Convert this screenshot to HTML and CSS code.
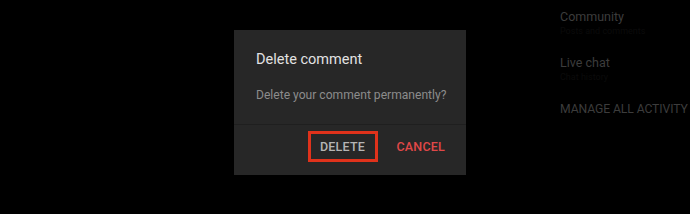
FILE: index.html
```html
<!DOCTYPE html>
<html lang="en">

<head>
    <meta charset="UTF-8">
    <meta name="viewport" content="width=device-width, initial-scale=1.0">
    <title>Delete comment</title>
    <link rel="stylesheet" href="styles.css">
</head>

<body>
    <div class="screen">
        <!-- 댓글 삭제 대화상자 -->
        <div class="dialog-area">
            <div class="dialog">
                <div class="dialog-body">
                    <div class="dialog-title">Delete comment</div>
                    <div class="dialog-text">Delete your comment permanently?</div>
                </div>
                <div class="dialog-actions">
                    <button class="action delete">DELETE</button>
                    <button class="action cancel">CANCEL</button>
                </div>
            </div>
        </div>

        <!-- 우측 메뉴 (배경) -->
        <div class="side-menu">
            <div class="side-item">
                <div class="side-label">Community</div>
                <div class="side-sub">Posts and comments</div>
            </div>
            <div class="side-item">
                <div class="side-label">Live chat</div>
                <div class="side-sub">Chat history</div>
            </div>
            <div class="side-item">
                <div class="side-label caps">MANAGE ALL ACTIVITY</div>
            </div>
        </div>
    </div>
</body>

</html>
```

FILE: styles.css
```css
body {
    margin: 0;
    background-color: #000;
    font-family: Roboto, "Liberation Sans", sans-serif;
    overflow: hidden;
}

.screen {
    display: flex;
    width: 690px;
    height: 214px;
}

.dialog-area {
    padding: 30px 0 0 234px;
}

/* 대화상자 */
.dialog {
    width: 232px;
    height: 145px;
    background-color: #272727;
    display: flex;
    flex-direction: column;
}

.dialog-body {
    padding: 21px 10px 0 22px;
    height: 73px;
    border-bottom: 1px solid #1f1f1f;
}

.dialog-title {
    color: #e2e2e2;
    font-size: 14.5px;
    line-height: 17px;
}

.dialog-text {
    margin-top: 20px;
    color: #8c8c8c;
    font-size: 12.1px;
    line-height: 15px;
    white-space: nowrap;
}

.dialog-actions {
    display: flex;
    justify-content: flex-end;
    align-items: center;
    gap: 19px;
    padding: 6px 21px 0 0;
}

.action {
    background: none;
    border: none;
    font-family: Roboto, "Liberation Sans", sans-serif;
    font-size: 12.5px;
    font-weight: 500;
    letter-spacing: 0.2px;
    padding: 0;
    cursor: pointer;
}

.delete {
    color: #b5b5b5;
    width: 70px;
    height: 31px;
    border: 3px solid #e0321b;
    box-sizing: border-box;
}

.cancel {
    color: #e04848;
}

/* 우측 메뉴 */
.side-menu {
    padding: 9px 0 0 326px;
    margin-left: -232px;
    white-space: nowrap;
}

.side-item {
    height: 46px;
}

.side-label {
    color: #3c3c3c;
    font-size: 12.5px;
    line-height: 16px;
}

.side-label.caps {
    font-size: 12.2px;
    letter-spacing: -0.1px;
}

.side-sub {
    color: #0b0b0b;
    font-size: 9px;
    line-height: 12px;
}
```
